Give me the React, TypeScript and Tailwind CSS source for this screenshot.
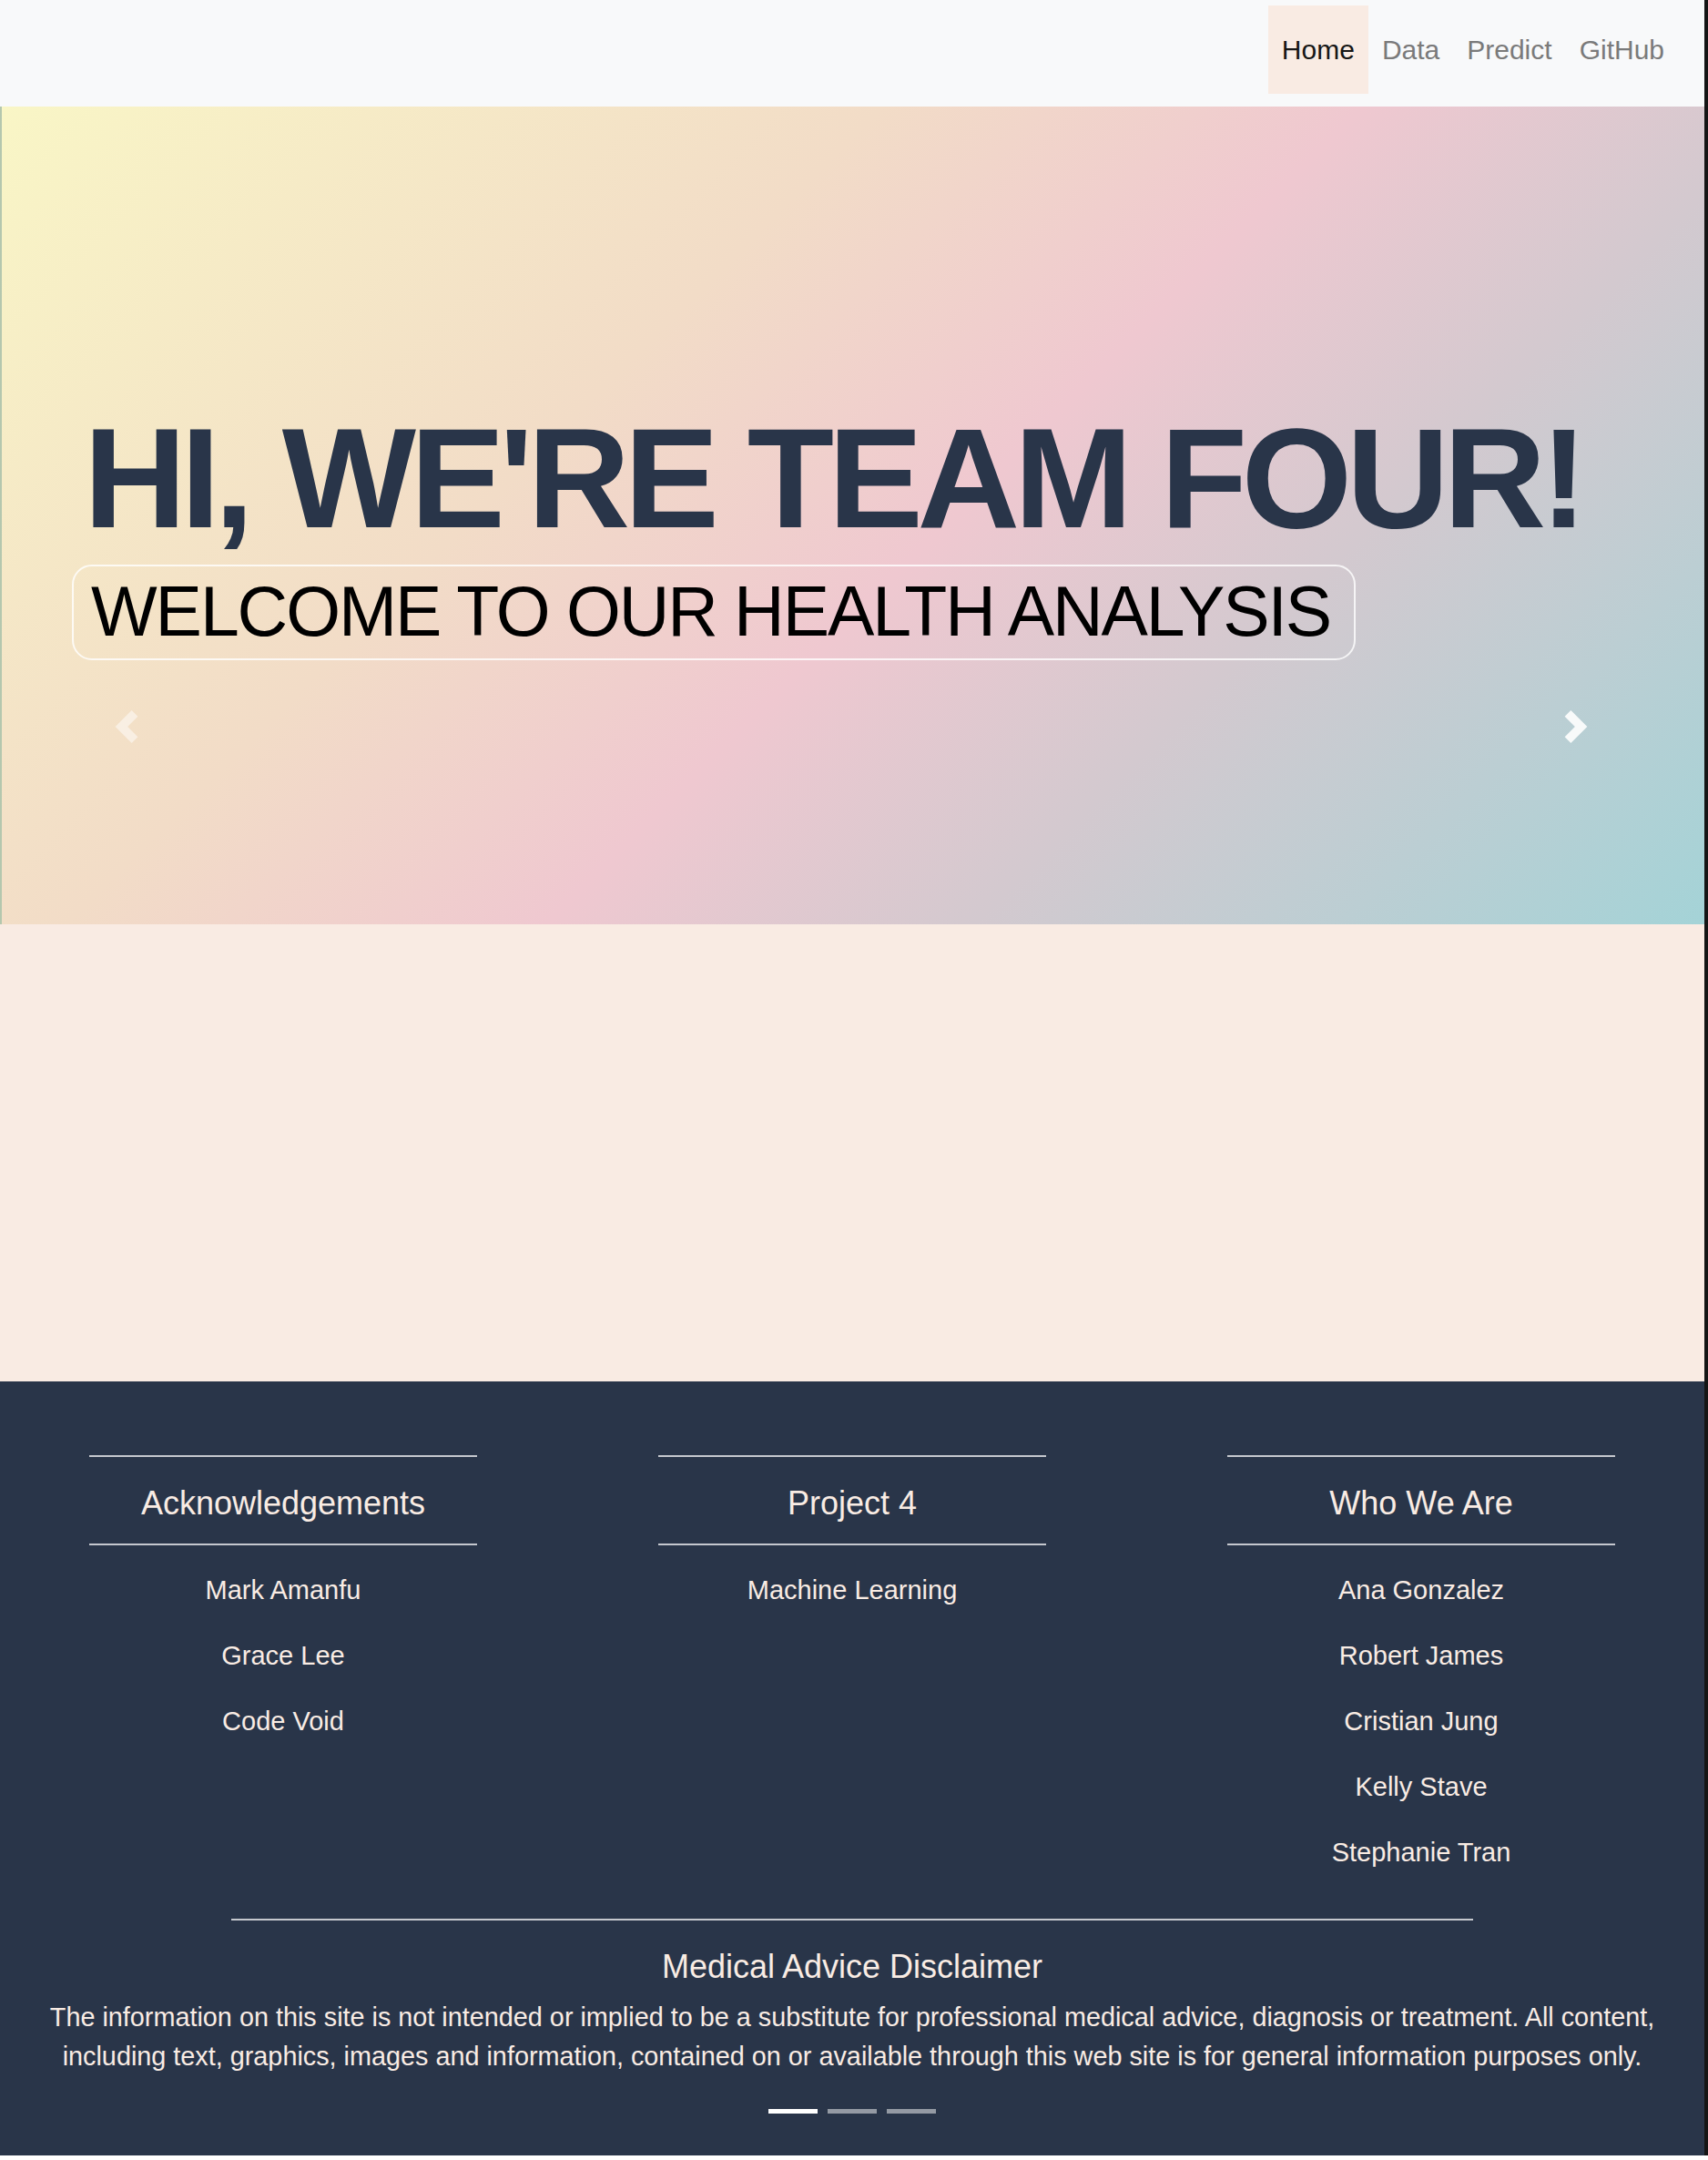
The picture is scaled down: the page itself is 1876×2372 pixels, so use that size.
import React from "react";

const navLinks = [
  { label: "Home", active: true },
  { label: "Data", active: false },
  { label: "Predict", active: false },
  { label: "GitHub", active: false },
];

const acknowledgements = ["Mark Amanfu", "Grace Lee", "Code Void"];
const project = ["Machine Learning"];
const team = [
  "Ana Gonzalez",
  "Robert James",
  "Cristian Jung",
  "Kelly Stave",
  "Stephanie Tran",
];

// bootstrap 4 style carousel chevrons
const Chevron = ({ dir }: { dir: "left" | "right" }) => (
  <svg width="36" height="36" viewBox="0 0 8 8" fill="#fff">
    <path
      d={
        dir === "left"
          ? "M5.25 0l-4 4 4 4 1.5-1.5L4.25 4l2.5-2.5L5.25 0z"
          : "M2.75 0l-1.5 1.5L3.75 4l-2.5 2.5L2.75 8l4-4-4-4z"
      }
    />
  </svg>
);

interface FooterColumnProps {
  title: string;
  items: string[];
}

const FooterColumn = ({ title, items }: FooterColumnProps) => (
  <div className="w-[426px] flex flex-col items-center">
    <div className="h-[2px] w-full bg-[#c5c8ce]" />
    <h5 className="mt-[29px] mb-[23px] text-[36px] leading-[43px]">{title}</h5>
    <div className="h-[2px] w-full bg-[#c5c8ce]" />
    <ul className="mt-[13px] flex flex-col items-center">
      {items.map((item) => (
        <li key={item} className="text-[29px] leading-[72px]">
          {item}
        </li>
      ))}
    </ul>
  </div>
);

const App = () => {
  return (
    <div className="w-full border-r-4 border-[#151515] font-['Liberation_Sans',Arial,sans-serif]">
      <nav className="h-[117px] bg-[#f8f9fa] flex justify-end items-start pt-[6px] pr-[29px]">
        {navLinks.map((link) => (
          <a
            key={link.label}
            className={
              link.active
                ? "h-[97px] px-[15px] flex items-center text-[30px] text-[#161616] bg-[#f9ebe3]"
                : "h-[97px] px-[15px] flex items-center text-[30px] text-[#7a7a7a]"
            }
          >
            {link.label}
          </a>
        ))}
      </nav>

      <section className="relative h-[898px] border-l-2 border-[#b4c7ae] bg-[linear-gradient(135deg,#f9f6c6_0%,#f2dcc7_35%,#efc8d0_54%,#d3c9cf_71%,#a4d3d7_100%)] pl-[77px] pt-[330px] flex flex-col items-start">
        <h1 className="ml-[13px] text-[156px] leading-none font-bold tracking-[-0.04em] text-[#293549] whitespace-nowrap">
          HI, WE'RE TEAM FOUR!
        </h1>
        <div className="mt-[17px] border-2 border-white/80 rounded-[22px] pl-[19px] pr-[26px] pt-[11px] pb-[13px]">
          <p className="text-[77px] leading-none tracking-[-0.027em] text-black whitespace-nowrap">
            WELCOME TO OUR HEALTH ANALYSIS
          </p>
        </div>
        <button className="absolute left-[119px] top-[663px] opacity-50">
          <Chevron dir="left" />
        </button>
        <button className="absolute left-[1711px] top-[663px] opacity-90">
          <Chevron dir="right" />
        </button>
      </section>

      <section className="h-[502px] bg-[#f9ebe3]" />

      <footer className="bg-[#293549] text-[#f9ece4] pt-[81px] pb-[46px]">
        <div className="flex justify-center gap-[199px]">
          <FooterColumn title="Acknowledgements" items={acknowledgements} />
          <FooterColumn title="Project 4" items={project} />
          <FooterColumn title="Who We Are" items={team} />
        </div>

        <div className="mt-[37px] flex flex-col items-center">
          <div className="h-[2px] w-[1364px] bg-[#c5c8ce]" />
          <h5 className="mt-[29px] text-[36px] leading-[43px]">
            Medical Advice Disclaimer
          </h5>
          <p className="mt-[13px] text-[28.8px] leading-[43px] text-center">
            The information on this site is not intended or implied to be a
            substitute for professional medical advice, diagnosis or treatment.
            All content,
            <br />
            including text, graphics, images and information, contained on or
            available through this web site is for general information purposes
            only.
          </p>
          <div className="mt-[36px] flex gap-[11px]">
            <span className="w-[54px] h-[5px] bg-white" />
            <span className="w-[54px] h-[5px] bg-white/50" />
            <span className="w-[54px] h-[5px] bg-white/50" />
          </div>
        </div>
      </footer>
    </div>
  );
};

export default App;
